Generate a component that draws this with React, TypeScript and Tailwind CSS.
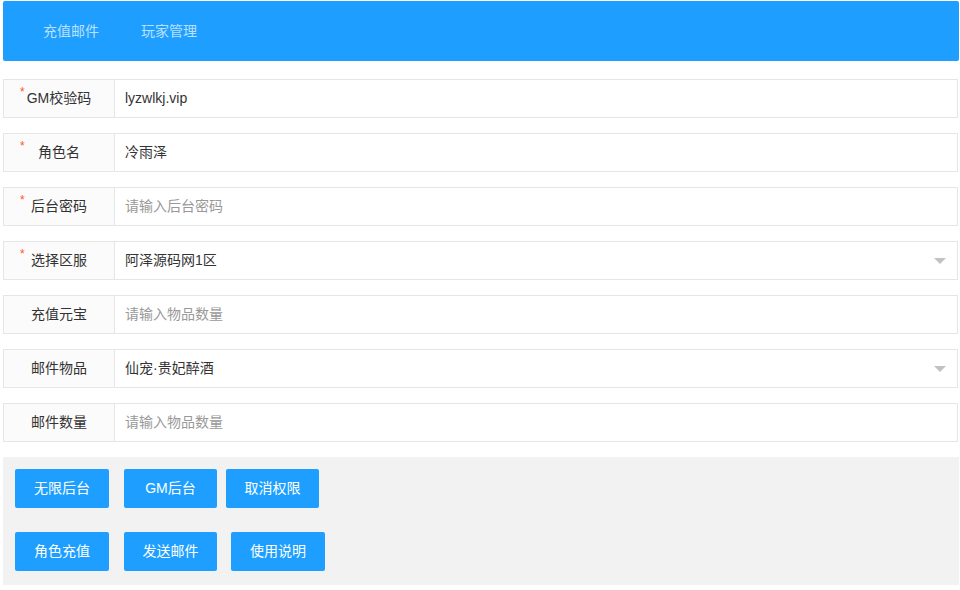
const font = { fontFamily: '"Liberation Sans", "Noto Sans CJK SC", sans-serif' };

type Row = { label: string; req?: boolean; value?: string; placeholder?: string; select?: boolean };

const rows: Row[] = [
  { label: "GM校验码", req: true, value: "lyzwlkj.vip" },
  { label: "角色名", req: true, value: "冷雨泽" },
  { label: "后台密码", req: true, placeholder: "请输入后台密码" },
  { label: "选择区服", req: true, value: "阿泽源码网1区", select: true },
  { label: "充值元宝", placeholder: "请输入物品数量" },
  { label: "邮件物品", value: "仙宠·贵妃醉酒", select: true },
  { label: "邮件数量", placeholder: "请输入物品数量" },
];

function FormRow({ row }: { row: Row }) {
  return (
    <div className="flex h-[39px] mr-[1px] border border-[#e6e6e6] bg-white">
      <div className="relative w-[111px] shrink-0 flex items-center justify-center bg-[#fbfbfb] border-r border-[#e6e6e6] text-[14px] text-[#333]">
        {row.req && <span className="absolute left-[16px] top-[3px] text-[#ff5722] text-[12px]">*</span>}
        <span>{row.label}</span>
      </div>
      <div className="flex-1 flex items-center pl-[10px] pr-[10px] text-[14px]">
        {row.value ? (
          <span className="text-[#333]">{row.value}</span>
        ) : (
          <span className="text-[#999]">{row.placeholder}</span>
        )}
        {row.select && (
          <span className="ml-auto mr-[1px] w-0 h-0 border-l-[6px] border-r-[6px] border-t-[6px] border-l-transparent border-r-transparent border-t-[#c2c2c2]" />
        )}
      </div>
    </div>
  );
}

function Btn({ text, className = "" }: { text: string; className?: string }) {
  return (
    <div className={`h-[39px] flex items-center justify-center rounded-[2px] bg-[#1e9fff] text-white text-[14px] ${className}`}>
      {text}
    </div>
  );
}

export default function App() {
  return (
    <div className="w-[960px] h-[590px] bg-white pl-[3px] pr-[1px] pt-[1px]" style={font}>
      <div className="h-[60px] bg-[#1e9fff] rounded-[2px] flex items-center pl-[40px] gap-[42px] text-[14px] text-white/70">
        <span>充值邮件</span>
        <span>玩家管理</span>
      </div>
      <div className="mt-[18px] flex flex-col gap-[15px]">
        {rows.map((r) => (
          <FormRow key={r.label} row={r} />
        ))}
      </div>
      <div className="mt-[15px] h-[128px] bg-[#f2f2f2] pt-[12px] pl-[12px]">
        <div className="flex">
          <Btn text="无限后台" className="w-[94px]" />
          <Btn text="GM后台" className="ml-[15px] w-[93px]" />
          <Btn text="取消权限" className="ml-[9px] w-[93px]" />
        </div>
        <div className="flex mt-[24px]">
          <Btn text="角色充值" className="w-[94px]" />
          <Btn text="发送邮件" className="ml-[15px] w-[93px]" />
          <Btn text="使用说明" className="ml-[14px] w-[94px]" />
        </div>
      </div>
    </div>
  );
}
